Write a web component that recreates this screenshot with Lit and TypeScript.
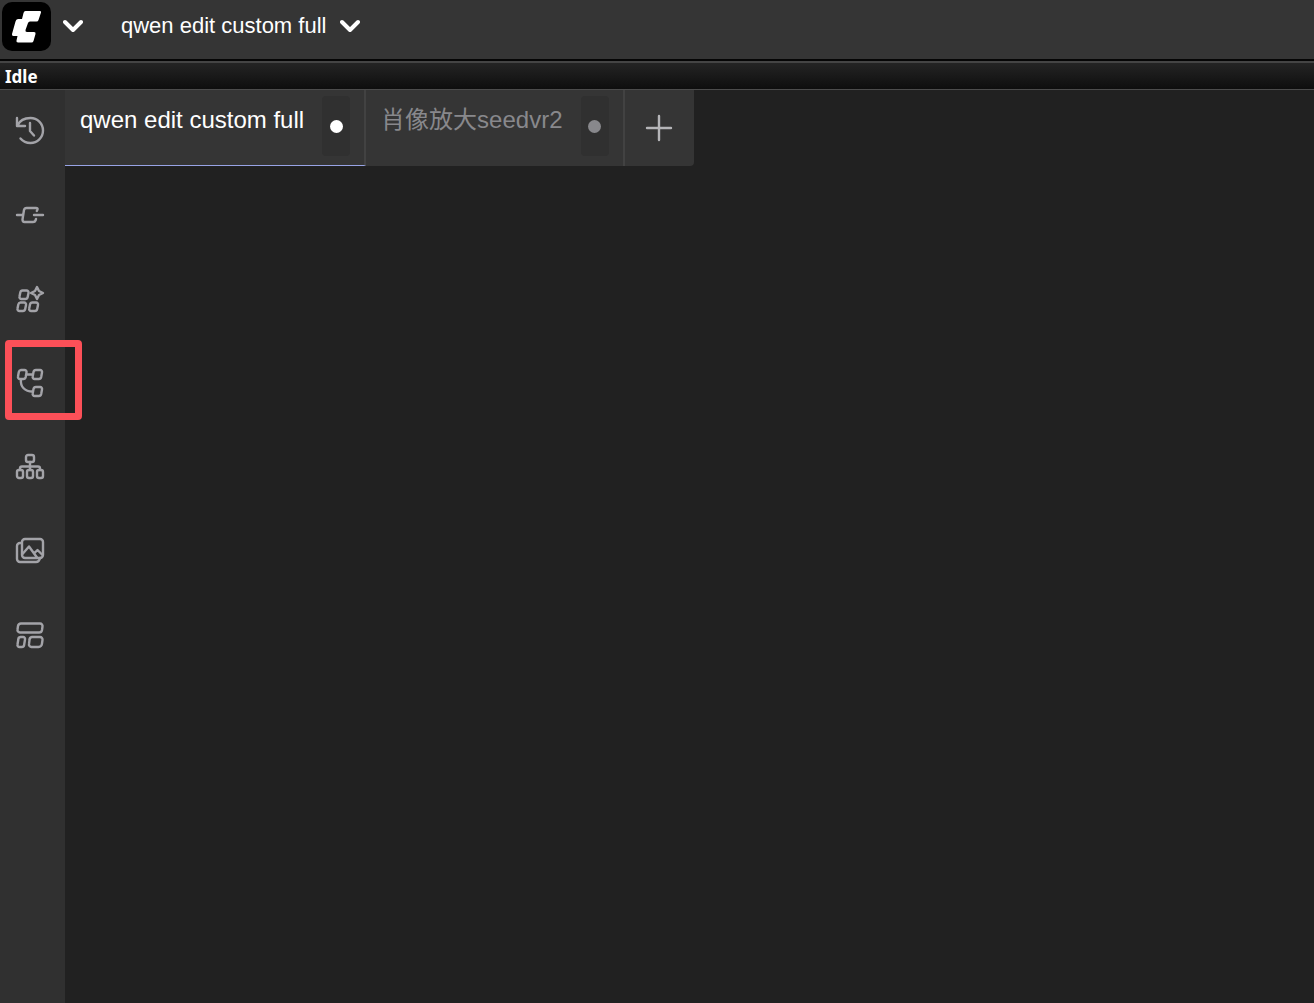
import { LitElement, html, css, svg } from "lit";
import { customElement } from "lit/decorators.js";

const icons = [
  {
    label: "Queue history",
    art: svg`<path d="M3 3v8h8M3.500 10.500C5.500 6 10.500 3 16.500 3a12.500 12.500 0 0 1 0 25c-4 0-7.500-1.500-10-4.500M16 8v8l4 4.500"/>`,
  },
  {
    label: "Nodes",
    art: svg`<path d="M3 16h5M20 16h9M22.800 12l.7-1.500Q24 9 22 9H12.500Q10.500 9 10 11L8.500 20.500Q8.500 23 10.500 23H19q2 0 2.500-1.500l.5-1.500"/>`,
  },
  {
    label: "Models",
    art: svg`<path d="M9 7.500h3.500a2 2 0 0 1 2 2.500l-.8 4a2.500 2.500 0 0 1-2.500 2H7.500a2 2 0 0 1-2-2.500l.8-4a2.500 2.500 0 0 1 2.700-2zM6.500 19.500h3.500a2 2 0 0 1 2 2.500l-.8 4a2.500 2.500 0 0 1-2.500 2H5.500a2 2 0 0 1-2-2.500l.8-4a2.500 2.500 0 0 1 2.200-2zM18.500 19.500h3.500a2 2 0 0 1 2 2.500l-.8 4a2.500 2.500 0 0 1-2.500 2h-3.500a2 2 0 0 1-2-2.500l.8-4a2.500 2.500 0 0 1 2.500-2zM23 4l2 4 4 2-4 2-2 4-2-4-4-2 4-2z"/>`,
  },
  {
    label: "Workflows",
    art: svg`<path d="M7 3h3.500a2 2 0 0 1 2 2.500l-.8 4.500a2.500 2.500 0 0 1-2.500 2H6a2 2 0 0 1-2-2.500l.8-4.500A2.500 2.500 0 0 1 7 3zM22 3h4a2 2 0 0 1 2 2.500l-.8 4.500a2.500 2.500 0 0 1-2.500 2h-4a2 2 0 0 1-2-2.500l.8-4.500A2.500 2.500 0 0 1 22 3zM22 20h4a2 2 0 0 1 2 2.500l-.8 4.500a2.500 2.500 0 0 1-2.500 2h-4a2 2 0 0 1-2-2.500l.8-4.500a2.500 2.500 0 0 1 2.500-2zM12.500 7.500H19M7 12c-1 8 4 12.500 11.500 12.500"/>`,
  },
  {
    label: "Node map",
    art: svg`<rect x="12" y="4" width="8" height="7" rx="2"/><rect x="3" y="19" width="6" height="8" rx="2"/><rect x="13" y="19" width="6" height="8" rx="2"/><rect x="23" y="19" width="6" height="8" rx="2"/><path d="M16 11v8M6 19v-1.500a2 2 0 0 1 2-2h16a2 2 0 0 1 2 2V19"/>`,
  },
  {
    label: "Images",
    art: svg`<rect x="8" y="4" width="21" height="19" rx="3"/><path d="M7 8H6a3 3 0 0 0-3 3v13a3 3 0 0 0 3 3h16c2 0 3.500-1.500 4-4M8.500 19l6.500-7.500 8 11M20 18.500l3.500-3.500 5 5"/>`,
  },
  {
    label: "Templates",
    art: svg`<path d="M7 4.500h19a2.500 2.500 0 0 1 2.500 3L28 11a3 3 0 0 1-3 2.500H6A2.500 2.500 0 0 1 3.500 10.500L4 7a3 3 0 0 1 3-2.500zM6.500 18h2.500a2 2 0 0 1 2 2.500l-.8 5a2.500 2.500 0 0 1-2.500 2.500H5.500a2 2 0 0 1-2-2.500l.8-5a2.500 2.500 0 0 1 2.200-2.500zM18 18h8a2.500 2.500 0 0 1 2.500 3l-.5 3.500a3.500 3.500 0 0 1-3.500 3.500H17.500a2.500 2.500 0 0 1-2.500-3l.5-4a3 3 0 0 1 2.500-3z"/>`,
  },
];

const chevron = html`<svg class="chevron" viewBox="0 0 20 14" aria-hidden="true">
  <path d="M2 3l8 8 8-8" />
</svg>`;

@customElement("app-root")
export class AppRoot extends LitElement {
  static styles = css`
    :host {
      display: flex;
      flex-direction: column;
      min-height: 100vh;
      background: #212121;
      color: #fff;
      font-family: "Liberation Sans", "Noto Sans CJK SC", sans-serif;
    }
    button {
      margin: 0;
      padding: 0;
      border: 0;
      background: none;
      color: inherit;
      font: inherit;
      cursor: pointer;
    }
    svg {
      display: block;
      fill: none;
      stroke: currentColor;
      stroke-width: 2.4;
      stroke-linecap: round;
      stroke-linejoin: round;
    }
    .topbar {
      display: flex;
      align-items: center;
      gap: 38px;
      box-sizing: border-box;
      height: 61px;
      padding: 0 2px 7px;
      background: #353535;
      border-bottom: 2px solid #050505;
    }
    .brand,
    .title {
      display: flex;
      align-items: center;
      gap: 12px;
    }
    .title {
      gap: 14px;
      font-size: 22px;
      line-height: 28px;
    }
    .logo {
      width: 49px;
      height: 49px;
      stroke: none;
    }
    .chevron {
      width: 20px;
      height: 14px;
      stroke-width: 4;
    }
    .status {
      box-sizing: border-box;
      height: 29px;
      padding: 0 5px;
      border-top: 2px solid #444;
      border-bottom: 1px solid #4c4c4c;
      background: linear-gradient(#242424, #0e0e0e);
      font-family: "Noto Sans", sans-serif;
      font-size: 17px;
      font-weight: 700;
      line-height: 28px;
    }
    .body {
      display: flex;
      flex: 1;
    }
    .sidebar {
      display: flex;
      flex-direction: column;
      box-sizing: border-box;
      width: 65px;
      padding-right: 5px;
      background: #303030;
      color: #a3a3a8;
    }
    .tool {
      position: relative;
      display: grid;
      place-items: center;
      height: 84px;
      padding-bottom: 2px;
    }
    .tool svg {
      width: 32px;
      height: 32px;
    }
    .highlight {
      position: absolute;
      inset: -2px -22px 6px 5px;
      border: 7px solid #fc5058;
      border-radius: 4px;
    }
    .main {
      flex: 1;
      min-width: 0;
    }
    .tabs {
      display: flex;
      width: max-content;
      height: 76px;
      background: #353535;
      border-radius: 0 0 4px 0;
    }
    .tab {
      display: flex;
      align-items: flex-start;
      gap: 18px;
      box-sizing: border-box;
      padding: 6px 14px 0 15px;
      border-right: 2px solid #424242;
      color: #88888c;
      font-size: 24px;
      line-height: 48px;
    }
    .tab.active {
      color: #fff;
      border-bottom: 1px solid #98a4e6;
    }
    .close {
      display: grid;
      place-items: center;
      width: 28px;
      height: 60px;
      background: #303030;
      border-radius: 4px;
    }
    .dot {
      width: 13px;
      height: 13px;
      border-radius: 50%;
      background: currentColor;
    }
    .add {
      display: grid;
      place-items: center;
      width: 69px;
      color: #b5b5b8;
    }
    .add svg {
      width: 28px;
      height: 28px;
    }
  `;

  render() {
    return html`
      <header class="topbar">
        <button class="brand" aria-label="Main menu">
          <svg class="logo" viewBox="0 0 49 49" aria-hidden="true">
            <rect width="49" height="49" rx="10" fill="#000" />
            <path
              fill="#fff"
              d="M23.500 9H38q1.500 0 1 1.500L36.500 18q-.5 1.500-2 1.500H28q-1.500 0-2 1.500l-2.500 7q-.5 2 1.500 2h7q2 0 1.500 2l-2 7q-.5 1.500-2 1.500H16q-2 0-1.500-2l1-4.500h-4q-2 0-1.500-2l3.500-12.500q.5-2.500 2.500-2.500h4l1.500-6q.5-2 2-2z"
            />
          </svg>
          ${chevron}
        </button>
        <button class="title"><span>qwen edit custom full</span>${chevron}</button>
      </header>
      <div class="status" role="status">Idle</div>
      <div class="body">
        <nav class="sidebar">
          ${icons.map(
            (icon) => html`<button class="tool" aria-label=${icon.label}>
              <svg viewBox="0 0 32 32" aria-hidden="true">${icon.art}</svg>
              ${icon.label === "Workflows" ? html`<span class="highlight"></span>` : ""}
            </button>`
          )}
        </nav>
        <main class="main">
          <div class="tabs">
            <div class="tab active">
              <span>qwen edit custom full</span>
              <button class="close" aria-label="Close first tab"><span class="dot"></span></button>
            </div>
            <div class="tab">
              <span>肖像放大seedvr2</span>
              <button class="close" aria-label="Close second tab"><span class="dot"></span></button>
            </div>
            <button class="add" aria-label="New tab">
              <svg viewBox="0 0 28 28" aria-hidden="true"><path d="M14 2v24M2 14h24" /></svg>
            </button>
          </div>
        </main>
      </div>
    `;
  }
}
